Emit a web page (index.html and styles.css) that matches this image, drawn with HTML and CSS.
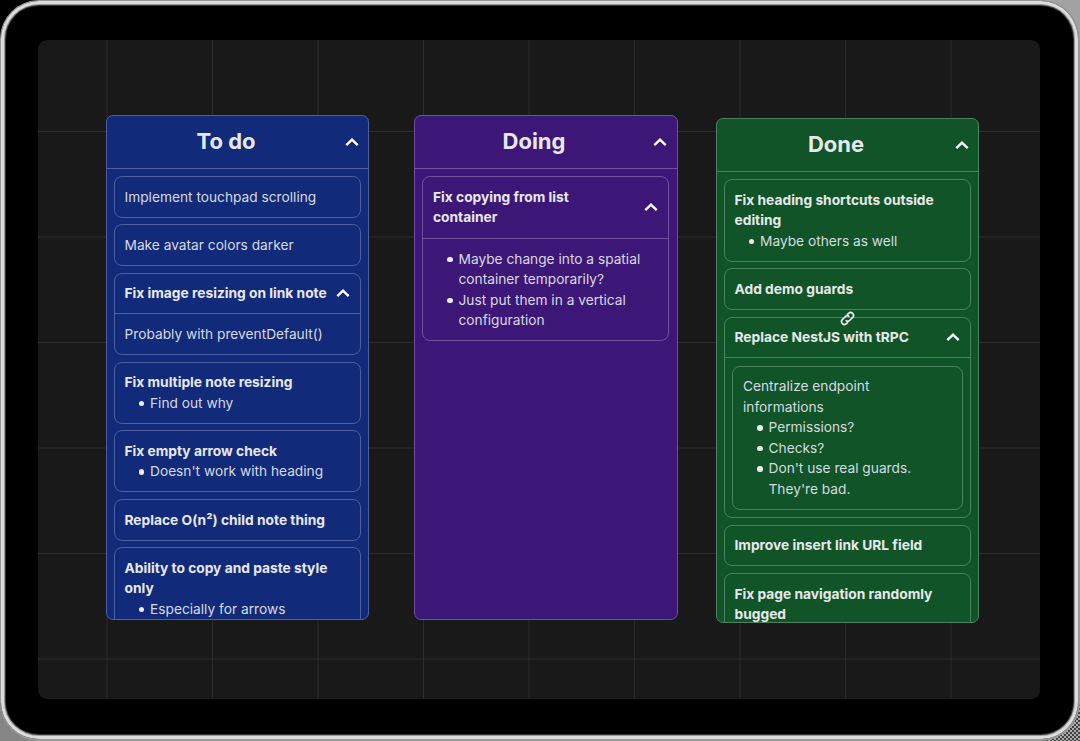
FILE: index.html
```html
<!DOCTYPE html>
<html lang="en">
<head>
<meta charset="utf-8">
<title>Task board</title>
<link rel="stylesheet" href="styles.css">
</head>
<body>
<svg class="defs" aria-hidden="true"><symbol id="chevron" viewBox="0 0 14 10"><path d="M1.3 8.2 7 2.6 12.7 8.2" fill="none" stroke="currentColor" stroke-width="2.4"/></symbol></svg>
<div class="device">
<main class="screen">
  <section class="column todo">
    <header class="column-head"><h1>To do</h1><svg class="chevron"><use href="#chevron"/></svg></header>
    <div class="column-body">
      <article class="card"><p>Implement touchpad scrolling</p></article>
      <article class="card"><p>Make avatar colors darker</p></article>
      <article class="card split">
        <header class="card-head"><h2>Fix image resizing on link note</h2><svg class="chevron"><use href="#chevron"/></svg></header>
        <div class="card-body"><p>Probably with preventDefault()</p></div>
      </article>
      <article class="card"><h2>Fix multiple note resizing</h2><ul><li>Find out why</li></ul></article>
      <article class="card"><h2>Fix empty arrow check</h2><ul><li>Doesn't work with heading</li></ul></article>
      <article class="card"><h2>Replace O(n²) child note thing</h2></article>
      <article class="card"><h2>Ability to copy and paste style only</h2><ul><li>Especially for arrows</li></ul></article>
    </div>
  </section>
  <section class="column doing">
    <header class="column-head"><h1>Doing</h1><svg class="chevron"><use href="#chevron"/></svg></header>
    <div class="column-body">
      <article class="card split">
        <header class="card-head"><h2>Fix copying from list container</h2><svg class="chevron"><use href="#chevron"/></svg></header>
        <div class="card-body"><ul><li>Maybe change into a spatial container temporarily?</li><li>Just put them in a vertical configuration</li></ul></div>
      </article>
    </div>
  </section>
  <section class="column done">
    <header class="column-head"><h1>Done</h1><svg class="chevron"><use href="#chevron"/></svg></header>
    <div class="column-body">
      <article class="card"><h2>Fix heading shortcuts outside editing</h2><ul><li>Maybe others as well</li></ul></article>
      <article class="card"><h2>Add demo guards</h2></article>
      <article class="card split linked">
        <svg class="link" viewBox="0 0 24 24"><path d="M9.2 14.8a4.6 4.6 0 0 0 6.5 0l4.6-4.6a4.6 4.6 0 0 0-6.5-6.5l-2.6 2.6M14.8 9.2a4.6 4.6 0 0 0-6.5 0l-4.6 4.6a4.6 4.6 0 0 0 6.5 6.5l2.6-2.6"/></svg>
        <header class="card-head"><h2>Replace NestJS with tRPC</h2><svg class="chevron"><use href="#chevron"/></svg></header>
        <div class="card-list">
          <article class="card"><p>Centralize endpoint informations</p><ul><li>Permissions?</li><li>Checks?</li><li>Don't use real guards. They're bad.</li></ul></article>
        </div>
      </article>
      <article class="card"><h2>Improve insert link URL field</h2></article>
      <article class="card"><h2>Fix page navigation randomly bugged</h2></article>
    </div>
  </section>
</main>
</div>
</body>
</html>
```
FILE: styles.css
```css
* { box-sizing: border-box; margin: 0; padding: 0; }
body {
  height: 741px;
  overflow: hidden;
  background:
    linear-gradient(#000, #000) 0 0 / 50% 50% no-repeat,
    linear-gradient(#a2a2a2, #a2a2a2) 100% 0 / 50% 50% no-repeat,
    linear-gradient(#858585, #858585) 0 100% / 50% 50% no-repeat,
    repeating-conic-gradient(#444 0 25%, #aaa 0 50%) 0 0 / 4px 4px;
  font: 13.72px/20.5px Inter, sans-serif;
}
.defs { position: absolute; width: 0; height: 0; }
.device {
  width: 1080px;
  height: 741px;
  padding: 39px 38px 40px 37px;
  border: 1px solid #999;
  border-right-width: 2px;
  border-bottom-width: 2px;
  border-radius: 39px;
  background: #000;
  box-shadow: inset 0 0 0 3px #dcdcdc, inset 0 0 0 4px #999, inset 0 0 0 5px #333;
}
.screen {
  height: 659px;
  padding: 75px 61px 0 68px;
  display: flex;
  align-items: flex-start;
  border-radius: 9px;
  background:
    linear-gradient(90deg, #2c2c2c 1px, transparent 1px) 68.5px 0 / 105.5px 100%,
    linear-gradient(#2c2c2c 1px, transparent 1px) 0 91px / 100% 105.5px,
    #191919;
}
.column {
  flex: none;
  width: 263px;
  height: 505px;
  border: 1px solid var(--line);
  border-radius: 7px;
  background: var(--fill);
  color: #e8e8ea;
  overflow: hidden;
}
.todo { --fill: #112a79; --line: #4c60a0; }
.doing { --fill: #3d1777; --line: #70509c; width: 264px; margin-left: 45px; }
.done { --fill: #105428; --line: #4b8260; margin: 3px 0 0 38px; }
.column-head {
  height: 53px;
  padding: 0 9px 0 0;
  display: flex;
  align-items: center;
  border-bottom: 1px solid var(--line);
}
.doing .column-head { padding-right: 10px; }
h1 { flex: 1; font-size: 22px; line-height: 30px; padding-bottom: 3px; text-align: center; font-weight: 700; }
.chevron { flex: none; width: 14px; height: 10px; color: #fff; }
.column-body {
  padding: 7.2px 7px 0 6.5px;
  display: flex;
  flex-direction: column;
  gap: 6.6px;
}
.doing .column-body { padding: 7.4px 8px 0 7px; }
.card {
  flex: none;
  padding: 9.6px 10px 9.5px;
  border: 1px solid var(--line);
  border-radius: 8px;
}
h2 { font-size: 13.78px; line-height: 20.5px; font-weight: 700; }
.doing h2 { max-width: 190px; }
p, li { color: #d7dae0; }
ul { padding-left: 25.5px; list-style: none; }
li::before {
  content: "";
  float: left;
  width: 5.5px;
  height: 5.5px;
  margin: 8px 0 0 -11.5px;
  border-radius: 50%;
  background: #eee;
}
.card.split { padding: 0; }
.card-head {
  padding: 9.6px 10px 9.5px;
  display: flex;
  align-items: center;
  justify-content: space-between;
  border-bottom: 1px solid var(--line);
}
.doing .card-head { padding-bottom: 10px; }
.card-body { padding: 9.8px 10px 9.6px; }
.card-list { padding: 7.5px; }
.linked { position: relative; }
.link {
  position: absolute;
  left: 115.5px;
  top: -6.5px;
  width: 15px;
  height: 15px;
  fill: none;
  stroke: #f2f2f2;
  stroke-width: 2.6;
}
```
